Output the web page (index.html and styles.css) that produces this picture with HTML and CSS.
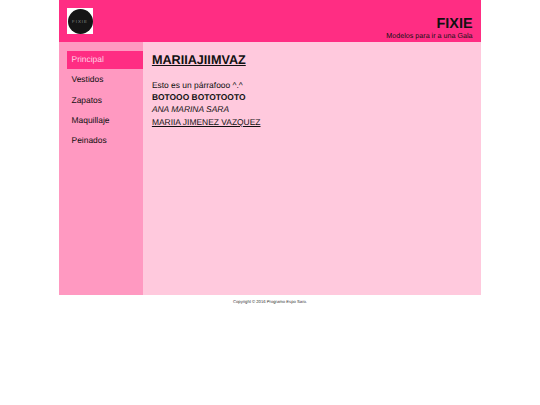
FILE: index.html
```html
<!DOCTYPE html>
<html lang="es">
<head>
<meta charset="utf-8">
<title>FIXIE</title>
<link rel="stylesheet" href="styles.css">
</head>
<body>
<div class="page">
  <header class="header">
    <div class="logo"><div class="logo-circle">FIXIE</div></div>
    <div class="brand">
      <h1 class="brand-title">FIXIE</h1>
      <p class="brand-sub">Modelos para ir a una Gala</p>
    </div>
  </header>
  <div class="main">
    <nav class="sidebar">
      <a class="nav-item active">Principal</a>
      <a class="nav-item">Vestidos</a>
      <a class="nav-item">Zapatos</a>
      <a class="nav-item">Maquillaje</a>
      <a class="nav-item">Peinados</a>
    </nav>
    <section class="content">
      <h2 class="title">MARIIAJIIMVAZ</h2>
      <p class="line">Esto es un párrafooo ^.^</p>
      <p class="line bold">BOTOOO BOTOTOOTO</p>
      <p class="line italic">ANA MARINA SARA</p>
      <p class="line under">MARIIA JIMENEZ VAZQUEZ</p>
    </section>
  </div>
  <footer class="footer">Copyright © 2016 Programo Espo Saro.</footer>
</div>
</body>
</html>
```
FILE: styles.css
```css
* { box-sizing: border-box; }
html, body { margin: 0; padding: 0; background: #fff; }
body {
  font-family: "Liberation Sans", Arial, sans-serif;
  color: #111;
  text-rendering: geometricPrecision;
}
.page { width: 422px; margin: 0 auto 0 59px; }
.header {
  height: 42px;
  background: #ff2d83;
  display: flex;
  justify-content: space-between;
  padding: 8px 8.5px;
}
.logo {
  width: 26px;
  height: 26px;
  margin-left: -0.5px;
  background: #fff;
  display: flex;
  align-items: center;
  justify-content: center;
}
.logo-circle {
  width: 25px;
  height: 25px;
  border-radius: 50%;
  background: #151515;
  color: #8c8c8c;
  font-size: 4.5px;
  letter-spacing: 0.9px;
  display: flex;
  align-items: center;
  justify-content: center;
}
.brand { text-align: right; padding-top: 8px; }
.brand-title { margin: 0; font-size: 14.4px; line-height: 16px; font-weight: 700; }
.brand-sub { margin: 0; font-size: 7.15px; line-height: 9px; }
.main { display: flex; height: 253px; }
.sidebar {
  width: 84.4px;
  background: #ff99c1;
  padding-top: 9px;
  padding-left: 8px;
  display: flex;
  flex-direction: column;
  gap: 2.7px;
}
.nav-item {
  height: 17.6px;
  line-height: 17.6px;
  padding-left: 4.5px;
  font-size: 8.45px;
  color: #111;
}
.nav-item.active { background: #ff2d83; color: #ffd0e3; }
.content {
  flex: 1;
  background: #ffc9dd;
  padding: 10px 8.5px;
}
.title {
  margin: 0 0 9.5px;
  font-size: 12.65px;
  line-height: 17px;
  font-weight: 700;
  text-decoration: underline;
}
.line { margin: 0; font-size: 8.45px; line-height: 12.45px; }
.bold { font-weight: 700; }
.italic { font-style: italic; }
.under { text-decoration: underline; }
.footer {
  text-align: center;
  font-size: 4.2px;
  line-height: 7px;
  padding-top: 3px;
  color: #333;
}
```
